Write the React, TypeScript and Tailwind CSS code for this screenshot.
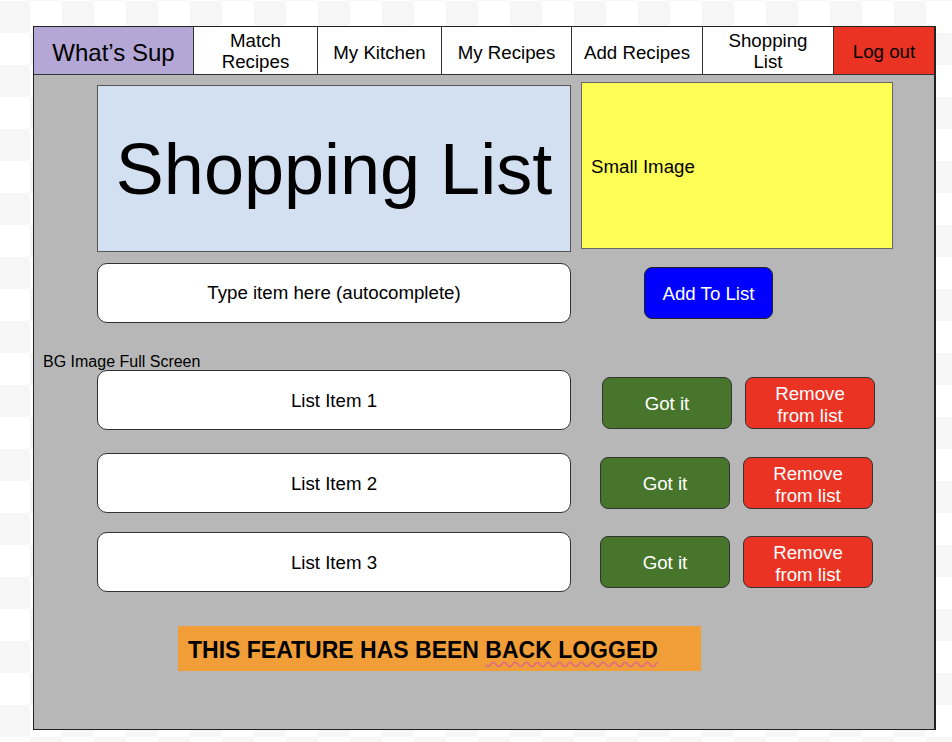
import React from "react";

const navCell = "flex items-center justify-center text-center border-r border-[#333] text-[18.7px] leading-[21px] text-black";

function ListRow({ label, mt, btnMt, gotMl }: { label: string; mt: string; btnMt: string; gotMl: string }) {
  return (
    <div className={`flex items-start ${mt}`}>
      <div className="ml-[63px] w-[474px] h-[60px] bg-white border border-[#333] rounded-[10px] flex items-center justify-center pt-[3px] text-[18.7px] text-black">
        {label}
      </div>
      <button className={`${btnMt} ${gotMl} w-[130px] h-[52px] bg-[#48752c] border border-[#333] rounded-[8px] text-white text-[18.7px] pt-[3px]`}>
        Got it
      </button>
      <button className={`${btnMt} ml-[13px] w-[130px] h-[52px] bg-[#ea3323] border border-[#333] rounded-[8px] text-white text-[18.7px] leading-[22px] flex flex-col items-center justify-center pt-[3px]`}>
        <span>Remove</span>
        <span>from list</span>
      </button>
    </div>
  );
}

export default function App() {
  return (
    <div className="w-[952px] h-[742px] overflow-hidden bg-[repeating-conic-gradient(#ffffff_0_25%,#f6f6f6_0_50%)] bg-[length:64px_64px] bg-[position:-2px_1px] font-['Liberation_Sans',Arial,sans-serif] pt-[26px] pl-[33px]">
      <div className="w-[903px] h-[704px] border border-r-2 border-[#222] flex flex-col">
        {/* Nav */}
        <div className="flex h-[48px] border-b border-[#333] shrink-0">
          <div className={`${navCell} w-[160px] bg-[#b4a7d6] text-[24px] pt-[3px]`}>What’s Sup</div>
          <div className={`${navCell} w-[124px] bg-white pt-[1px]`}>Match<br />Recipes</div>
          <div className={`${navCell} w-[124px] bg-white pt-[3px]`}>My Kitchen</div>
          <div className={`${navCell} w-[130px] bg-white pt-[3px]`}>My Recipes</div>
          <div className={`${navCell} w-[131px] bg-white pt-[3px]`}>Add Recipes</div>
          <div className={`${navCell} w-[131px] bg-white pt-[1px]`}>Shopping<br />List</div>
          <div className="flex items-center justify-center flex-1 bg-[#ea3323] text-[18.7px] text-black pt-[3px]">Log out</div>
        </div>

        {/* Main */}
        <div className="flex-1 bg-[#b7b7b7] flex flex-col">
          <div className="flex items-start pt-[7px]">
            <div className="ml-[63px] mt-[3px] w-[474px] h-[167px] bg-[#d3e0f1] border border-[#555] flex items-center justify-center text-[72px] leading-none text-black pt-[1px]">
              Shopping List
            </div>
            <div className="ml-[10px] w-[312px] h-[167px] bg-[#ffff55] border border-[#666] flex items-center pl-[9px] pt-[4px] text-[18.7px] text-black">
              Small Image
            </div>
          </div>

          <div className="flex items-center mt-[11px]">
            <div className="ml-[63px] w-[474px] h-[60px] bg-white border border-[#333] rounded-[10px] flex items-center justify-center pt-[1px] text-[18.7px] text-black">
              Type item here (autocomplete)
            </div>
            <button className="ml-[73px] w-[129px] h-[52px] bg-[#0000ff] border border-[#222] rounded-[8px] text-white text-[18.7px] pt-[2px]">
              Add To List
            </button>
          </div>

          <div className="ml-[9px] mt-[30px] h-[17px] text-[16px] leading-[18px] text-black">BG Image Full Screen</div>

          <ListRow label="List Item 1" mt="mt-0" btnMt="mt-[7px]" gotMl="ml-[31px]" />
          <ListRow label="List Item 2" mt="mt-[23px]" btnMt="mt-[4px]" gotMl="ml-[29px]" />
          <ListRow label="List Item 3" mt="mt-[19px]" btnMt="mt-[4px]" gotMl="ml-[29px]" />

          <div className="ml-[144px] mt-[34px] w-[523px] h-[45px] bg-[#f19e38] flex items-center pl-[10px] pt-[3px] text-[23px] font-bold text-black">
            <span>THIS FEATURE HAS BEEN&nbsp;</span>
            <span className="underline decoration-wavy decoration-[#e0707a] decoration-[1.5px] underline-offset-[3px] [text-decoration-skip-ink:none]">BACK LOGGED</span>
          </div>
        </div>
      </div>
    </div>
  );
}
